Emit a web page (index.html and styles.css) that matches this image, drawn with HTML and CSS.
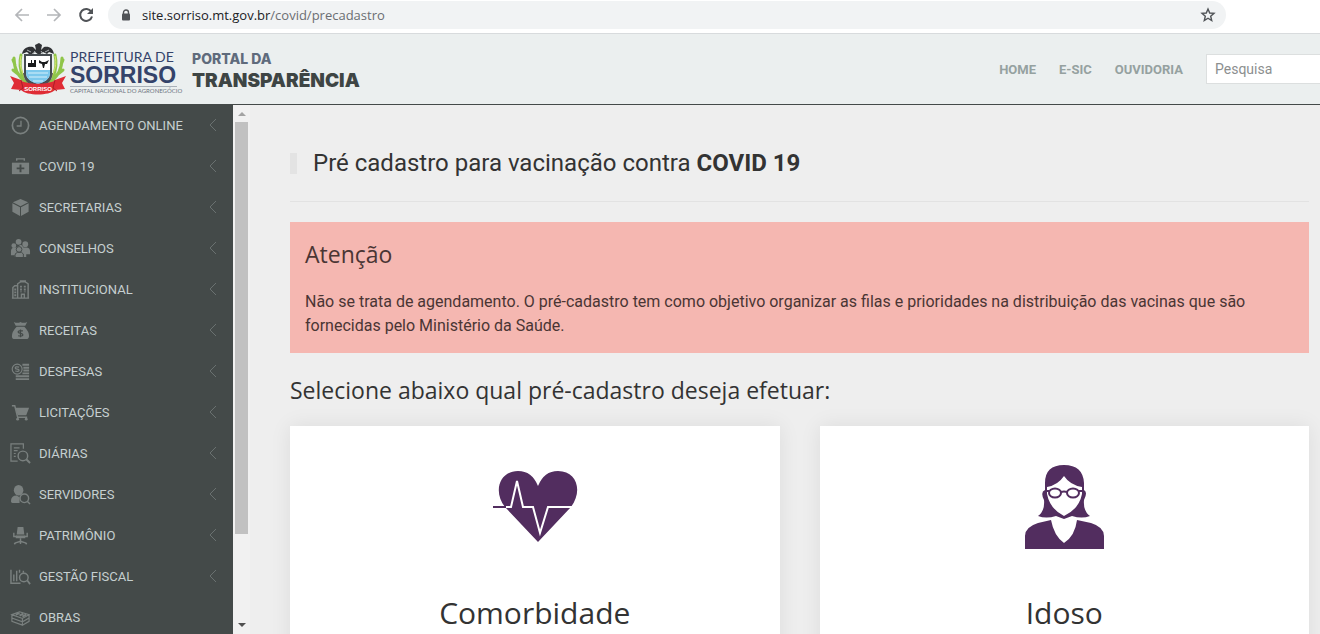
FILE: index.html
```html
<!DOCTYPE html>
<html lang="pt-BR">
<head>
    <meta charset="UTF-8">
    <meta name="viewport" content="width=device-width, initial-scale=1.0">
    <title>Portal da Transparência - Sorriso</title>
    <link rel="stylesheet" href="styles.css">
</head>
<body>

    <div class="browser-bar">
        <button class="nav-btn" aria-label="Voltar">
            <svg width="16" height="16" viewBox="0 0 16 16"><path d="M15 8H2M8 2L2 8l6 6" fill="none" stroke="#b4b6b9" stroke-width="1.7"/></svg>
        </button>
        <button class="nav-btn" aria-label="Avançar">
            <svg width="16" height="16" viewBox="0 0 16 16"><path d="M1 8h13M8 2l6 6-6 6" fill="none" stroke="#b4b6b9" stroke-width="1.7"/></svg>
        </button>
        <button class="nav-btn" aria-label="Recarregar">
            <svg width="16" height="16" viewBox="0 0 16 16"><path d="M13.3 4.7A6 6 0 1 0 14 9.500" fill="none" stroke="#505357" stroke-width="2"/><path d="M15 1v6H9z" fill="#505357"/></svg>
        </button>
        <div class="address">
            <svg width="10" height="12" viewBox="0 0 10 12"><path d="M2.500 5V3.500a2.500 2.500 0 0 1 5 0V5" fill="none" stroke="#505357" stroke-width="1.400"/><rect x="1" y="4.500" width="8" height="7" rx="1" fill="#505357"/></svg>
            <span class="url">site.sorriso.mt.gov.br<span class="path">/covid/precadastro</span></span>
            <button class="star" aria-label="Favorito">
                <svg width="16" height="16" viewBox="0 0 16 16"><path d="M8 2l1.700 4 4.300.400-3.300 2.800 1 4.300L8 11.200l-3.700 2.300 1-4.300L2 6.400 6.300 6z" fill="none" stroke="#505357" stroke-width="1.400"/></svg>
            </button>
        </div>
    </div>

    <header class="header">
        <a href="#" class="brand">
            <svg class="crest" width="58" height="52" viewBox="0 0 58 52">
                <!-- ramos -->
                <g fill="none" stroke="#8fc549" stroke-width="3" stroke-linecap="round">
                    <path d="M17 39C8 33 5 25 5 15M14 34C11 27 10 20 12 12M6 22l-2-5M9 31l-5-4"/>
                    <path d="M41 39c9-6 12-14 12-24M44 34c3-7 4-14 2-22M52 22l2-5M49 31l5-4"/>
                </g>
                <path d="M12 13c-2 8 0 14 4 22M46 13c2 8 0 14-4 22" fill="none" stroke="#d9e36a" stroke-width="1"/>
                <!-- águia -->
                <path d="M13 11c1-6 6-8 11-7l3 3-1-5 4-2 3 2-1 5 3-3c5-1 9 1 10 7l-5-2-2 2-4-2-4 3-4-3-5 3-3-3z" fill="#303235"/>
                <path d="M18 7l4 2M40 7l-4 2M26 8l-2 3M32 8l2 3" stroke="#aeb3b5" stroke-width="1"/>
                <!-- escudo -->
                <path d="M16 12h26v18c0 7-6 10-13 12-7-2-13-5-13-12z" fill="#fff" stroke="#454b50" stroke-width="2"/>
                <path d="M17 27h24v3c0 6-5 9-12 11-7-2-12-5-12-11z" fill="#7cc8ec"/>
                <path d="M19 30h20M20 34h18M24 38h10" stroke="#d6f0fb" stroke-width="1"/>
                <path d="M19 24v-4h3v-3h1v3h2v-3h2v7zM30 17l3 2h3l4-2-2 4h-2l-1 4h-1l-1-4-3-1z" fill="#191b1c"/>
                <path d="M15 30c1 7 6 12 14 14 8-2 13-7 14-14" fill="none" stroke="#4c5154" stroke-width="2"/>
                <!-- faixa -->
                <path d="M1 33l11 4c4 5 29 5 34 0l11-4-4 7 3 6-10 1c-6 6-28 6-34 0l-10-1 3-6z" fill="#df2c35"/>
                <path d="M12 37l2 8-4 3M46 37l-2 8 4 3" fill="none" stroke="#a91f28" stroke-width="1"/>
                <text class="crest-text" x="29" y="48" text-anchor="middle">SORRISO</text>
            </svg>
            <span class="city">
                <span class="city-top">PREFEITURA DE</span>
                <strong class="city-name">SORRISO</strong>
                <span class="city-sub">CAPITAL NACIONAL DO AGRONEGÓCIO</span>
            </span>
            <span class="portal">
                <span class="portal-top">PORTAL DA</span>
                <span class="portal-name">TRANSPARÊNCIA</span>
            </span>
        </a>
        <nav class="top-nav">
            <a href="#">HOME</a>
            <a href="#">E-SIC</a>
            <a href="#">OUVIDORIA</a>
            <input type="text" class="search" placeholder="Pesquisa" aria-label="Pesquisa">
        </nav>
    </header>

    <div class="layout">
        <aside class="sidebar">
            <ul class="menu">
                <li><a href="#">
                    <svg class="icon" viewBox="0 0 22 22"><circle cx="11" cy="11" r="8.500" fill="none" stroke="currentColor" stroke-width="1.800"/><path d="M11.500 6v5.500H7" fill="none" stroke="currentColor" stroke-width="1.400"/></svg>
                    <span>AGENDAMENTO ONLINE</span><svg class="arrow" viewBox="0 0 8 14"><path d="M7 1L1 7l6 6"/></svg></a></li>
                <li><a href="#">
                    <svg class="icon" viewBox="0 0 22 22"><path d="M2 7h18v12H2z" fill="currentColor"/><path d="M7 5V3h8v2" fill="none" stroke="currentColor" stroke-width="1.500"/><path d="M11 9v8M7 13h8" stroke="#444a49" stroke-width="2"/></svg>
                    <span>COVID 19</span><svg class="arrow" viewBox="0 0 8 14"><path d="M7 1L1 7l6 6"/></svg></a></li>
                <li><a href="#">
                    <svg class="icon" viewBox="0 0 22 22"><path d="M11 2l8 3.500-8 4.200L3 5.500zM2.500 6.500l8 4.200V20l-8-4.500zM19.500 6.500l-8 4.200V20l8-4.500z" fill="currentColor"/></svg>
                    <span>SECRETARIAS</span><svg class="arrow" viewBox="0 0 8 14"><path d="M7 1L1 7l6 6"/></svg></a></li>
                <li><a href="#">
                    <svg class="icon" viewBox="0 0 22 22"><g fill="currentColor"><circle cx="9" cy="4" r="3"/><circle cx="4" cy="8" r="2.500"/><circle cx="16" cy="6.500" r="3"/><path d="M1 18v-4q0-4 4-4h2l4-3q2 0 3 3h3q4 0 4 4v3h-4v3H5v-2z"/></g><circle cx="9.500" cy="12" r="3" fill="currentColor" stroke="#444a49"/><path d="M5.500 20q-1-4 2.500-5h4q3 1 2 5" fill="none" stroke="#444a49"/></svg>
                    <span>CONSELHOS</span><svg class="arrow" viewBox="0 0 8 14"><path d="M7 1L1 7l6 6"/></svg></a></li>
                <li><a href="#">
                    <svg class="icon" viewBox="0 0 22 22"><path d="M3 20V9l2-2h3v13M8 20V5l3-2h5l3 2v15M2 20h18M11 3V2h5v1M12 20v-4h3v4" fill="none" stroke="currentColor" stroke-width="1.500"/><path d="M11.500 7v7M15.500 7v7M5.500 10v8" stroke="currentColor" stroke-width="2" stroke-dasharray="2 1"/></svg>
                    <span>INSTITUCIONAL</span><svg class="arrow" viewBox="0 0 8 14"><path d="M7 1L1 7l6 6"/></svg></a></li>
                <li><a href="#">
                    <svg class="icon" viewBox="0 0 22 22"><path d="M4 2q4 2 7 0 3 2 7 0l-2 4H6zM7 7h8q5 5 5 10-.5 3-3 3H5q-3 0-3-3Q2 12 7 7z" fill="currentColor"/><path d="M13.500 11.500q-5-1-5 1.200 0 1 2.500 1.300t2.500 1.500q0 2-5 1M11 10v8" fill="none" stroke="#444a49" stroke-width="1.300"/></svg>
                    <span>RECEITAS</span><svg class="arrow" viewBox="0 0 8 14"><path d="M7 1L1 7l6 6"/></svg></a></li>
                <li><a href="#">
                    <svg class="icon" viewBox="0 0 22 22"><path d="M13 4h7M14 7h6M14 10h6M13 13h7M6 16h14M6 19h14" stroke="currentColor" stroke-width="2"/><circle cx="7.500" cy="8.500" r="5.200" fill="none" stroke="currentColor" stroke-width="1.200"/><path d="M9.500 6.500q-4-1-4 .8 0 .9 2 1.200t2 1.200q0 1.800-4 .8" fill="none" stroke="currentColor" stroke-width="1.300"/></svg>
                    <span>DESPESAS</span><svg class="arrow" viewBox="0 0 8 14"><path d="M7 1L1 7l6 6"/></svg></a></li>
                <li><a href="#">
                    <svg class="icon" viewBox="0 0 22 22"><path d="M2 4h3l3 12h10" fill="none" stroke="currentColor" stroke-width="1.500"/><path d="M5.500 6H20l-3 8H8z" fill="currentColor"/><circle cx="8" cy="18" r="1.500" fill="currentColor"/><circle cx="17" cy="18" r="1.500" fill="currentColor"/></svg>
                    <span>LICITAÇÕES</span><svg class="arrow" viewBox="0 0 8 14"><path d="M7 1L1 7l6 6"/></svg></a></li>
                <li><a href="#">
                    <svg class="icon" viewBox="0 0 22 22"><path d="M8 19H1V1h13v5M4 5h6M4 8h4M4 11h2M4 14h2" fill="none" stroke="currentColor" stroke-width="1.300"/><circle cx="13.500" cy="13.500" r="5" fill="none" stroke="currentColor" stroke-width="1.500"/><path d="M17 17l4 4" stroke="currentColor" stroke-width="2"/></svg>
                    <span>DIÁRIAS</span><svg class="arrow" viewBox="0 0 8 14"><path d="M7 1L1 7l6 6"/></svg></a></li>
                <li><a href="#">
                    <svg class="icon" viewBox="0 0 22 22"><ellipse cx="9" cy="6.500" rx="5" ry="5.500" fill="currentColor"/><path d="M1 18q0-6 6-6l3 2v6H4q-3 0-3-2z" fill="currentColor"/><circle cx="15" cy="15" r="4.500" fill="#444a49" stroke="currentColor" stroke-width="1.500"/><path d="M18 18l3 3" stroke="currentColor" stroke-width="1.500"/></svg>
                    <span>SERVIDORES</span><svg class="arrow" viewBox="0 0 8 14"><path d="M7 1L1 7l6 6"/></svg></a></li>
                <li><a href="#">
                    <svg class="icon" viewBox="0 0 22 22"><path d="M8 2h6l1 8H7zM6 11h10v3H6z" fill="currentColor"/><path d="M4 8v4h3M18 8v4h-3M11 14v6M5 19l6-2 6 2" fill="none" stroke="currentColor" stroke-width="1.500"/><circle cx="5" cy="19.500" r="1" fill="currentColor"/><circle cx="17" cy="19.500" r="1" fill="currentColor"/></svg>
                    <span>PATRIMÔNIO</span><svg class="arrow" viewBox="0 0 8 14"><path d="M7 1L1 7l6 6"/></svg></a></li>
                <li><a href="#">
                    <svg class="icon" viewBox="0 0 22 22"><path d="M1 4v14h10M4 16V9M7 16V5M10 7V4M14 7V5" fill="none" stroke="currentColor" stroke-width="1.500"/><circle cx="14.500" cy="12" r="4.500" fill="none" stroke="currentColor" stroke-width="1.500"/><path d="M18 15l3 4" stroke="currentColor" stroke-width="1.800"/></svg>
                    <span>GESTÃO FISCAL</span><svg class="arrow" viewBox="0 0 8 14"><path d="M7 1L1 7l6 6"/></svg></a></li>
                <li><a href="#">
                    <svg class="icon" viewBox="0 0 22 22"><path d="M2 8l8-3 10 3-7 4zM2 8v7l11 4V12M20 8v7l-7 4M2 11.500l11 4 7-4" fill="none" stroke="currentColor" stroke-width="1.200"/><path d="M6 8l4-1.500M10 9l4-2M13 10l4-2" stroke="currentColor" stroke-width="2"/></svg>
                    <span>OBRAS</span></a></li>
            </ul>
        </aside>
        <div class="scrollbar">
            <span class="up"></span>
            <div class="track"><div class="thumb"></div></div>
            <span class="down"></span>
        </div>

        <main class="content">
            <h1>Pré cadastro para vacinação contra <strong>COVID 19</strong></h1>

            <div class="alert">
                <h2>Atenção</h2>
                <p>Não se trata de agendamento. O pré-cadastro tem como objetivo organizar as filas e prioridades na distribuição das vacinas que são fornecidas pelo Ministério da Saúde.</p>
            </div>

            <h2 class="choose">Selecione abaixo qual pré-cadastro deseja efetuar:</h2>

            <div class="cards">
                <a href="#" class="card">
                    <svg width="86" height="86" viewBox="0 0 86 86">
                        <path d="M46 79L13 44C1 29 7 8 26 8q14 0 20 15Q52 8 66 8c19 0 25 20 13 36z" fill="#522d5f"/>
                        <path d="M13 44h6l6-26 6 26h10l7 26 8-26h24" fill="none" stroke="#fff" stroke-width="2"/>
                        <path d="M1 44h13" stroke="#522d5f" stroke-width="2"/>
                    </svg>
                    <h3>Comorbidade</h3>
                </a>
                <a href="#" class="card">
                    <svg width="86" height="86" viewBox="0 0 86 86">
                        <g fill="#522d5f">
                            <path d="M24 27V20Q24 2 43 2t20 18v7q4 2 0 10-1 11 6 16-8 3-18 0l-8 3-8-3q-10 3-18 0 7-5 6-16-4-8 1-10z"/>
                            <path d="M4 86V73q0-9 13-13l13-3q3 16 13 23 11-7 13-23l14 3q13 4 13 13v13z"/>
                        </g>
                        <path d="M43 13q6 9 18 11v7q-3 15-18 22-14-7-17-22v-7q11-2 17-11z" fill="#fff"/>
                        <g fill="#fff" stroke="#522d5f" stroke-width="2">
                            <ellipse cx="34" cy="30" rx="6" ry="4.500"/><ellipse cx="52" cy="30" rx="6" ry="4.500"/>
                            <path d="M40 29q3-1 6 0M24 28h4M58 28h4" fill="none"/>
                        </g>
                    </svg>
                    <h3>Idoso</h3>
                </a>
            </div>
        </main>
    </div>

</body>
</html>
```
FILE: styles.css
```css
* {
    box-sizing: border-box;
}
body {
    margin: 0;
    height: 100vh;
    display: flex;
    flex-direction: column;
    overflow: hidden;
    font-family: Roboto, Arial, sans-serif;
    background-color: #eee;
    color: #333;
}
a {
    text-decoration: none;
    color: inherit;
}
button {
    padding: 0;
    border: 0;
    background: none;
    cursor: pointer;
}
svg {
    display: block;
    flex: none;
}

/* barra do navegador */
.browser-bar {
    flex: none;
    display: flex;
    align-items: center;
    gap: 16px;
    height: 34px;
    padding: 0 94px 4px 14px;
    background: #fff;
    border-bottom: 1px solid #d8dbdd;
}
.address {
    flex: 1;
    display: flex;
    align-items: center;
    gap: 11px;
    height: 28px;
    margin-left: -2px;
    padding: 0 10px 0 13px;
    border-radius: 14px;
    background: #f1f3f4;
}
.url {
    flex: 1;
    font-family: "Open Sans", sans-serif;
    font-size: 13px;
    color: #202124;
}
.path {
    color: #6b6e72;
}

/* topo */
.header {
    flex: none;
    display: flex;
    align-items: center;
    justify-content: space-between;
    height: 71px;
    background: #ebefef;
    border-bottom: 1px solid #444a49;
}
.brand {
    display: flex;
    align-items: center;
    padding-left: 9px;
}
.crest-text {
    font: bold 6px "Liberation Sans", Arial, sans-serif;
    fill: #fff;
}
.city {
    display: flex;
    flex-direction: column;
    width: 107px;
    margin-left: 3px;
    padding-top: 5px;
    font-family: Lato, Arial, sans-serif;
    color: #34436a;
    white-space: nowrap;
}
.city-top {
    font-size: 14px;
    line-height: 16px;
}
.city-name {
    font-family: "Liberation Sans", Arial, sans-serif;
    font-size: 23px;
    line-height: 20px;
}
.city-sub {
    margin-top: 1px;
    border-top: 1px solid #a9b0b8;
    font-size: 6px;
    line-height: 8px;
    color: #6c7480;
}
.portal {
    display: flex;
    flex-direction: column;
    margin-left: 15px;
    padding-top: 3px;
    font-family: Inter, Arial, sans-serif;
    font-weight: 900;
}
.portal-top {
    font-size: 14px;
    font-weight: 800;
    line-height: 20px;
    color: #5f6b7c;
}
.portal-name {
    font-size: 19px;
    line-height: 24px;
    color: #3e4544;
}
.top-nav {
    display: flex;
    align-items: center;
    gap: 23px;
    font-size: 13px;
    font-weight: bold;
    color: #95a1a0;
}
.search {
    width: 114px;
    height: 30px;
    padding: 0 8px;
    border: 1px solid #dcdfdf;
    border-right: 0;
    background: #fff;
    font-family: inherit;
    font-size: 14px;
}
.search::placeholder {
    color: #8c8f8f;
}

/* menu lateral */
.layout {
    flex: 1;
    display: flex;
    min-height: 0;
}
.sidebar {
    flex: none;
    width: 233px;
    overflow: hidden;
    background: #444a49;
}
.menu {
    margin: 0;
    padding: 0;
    list-style: none;
}
.menu a {
    display: flex;
    align-items: center;
    height: 41px;
    padding: 0 16px 1px 10px;
    font-size: 13px;
    color: #c6d0d0;
}
.menu span {
    flex: 1;
    margin-left: 8px;
}
.icon {
    width: 21px;
    height: 21px;
    color: #7a807f;
}
.arrow {
    width: 8px;
    height: 14px;
    fill: none;
    stroke: #6a7170;
}
.scrollbar {
    flex: none;
    display: flex;
    flex-direction: column;
    align-items: center;
    width: 17px;
    background: #f1f1f1;
}
.up, .down {
    border: 4px solid transparent;
}
.up {
    margin: 3px 0 6px;
    border-bottom-color: #a3a3a3;
}
.down {
    margin: 5px 0 3px;
    border-top-color: #505050;
}
.track {
    flex: 1;
    width: 13px;
}
.thumb {
    height: 83%;
    background: #c1c1c1;
}

/* conteudo */
.content {
    flex: 1;
    min-width: 0;
    overflow: hidden;
    padding: 39px 11px 0 40px;
}
h1, h2, h3 {
    margin: 0;
    font-weight: normal;
}
h1 {
    display: flex;
    align-items: center;
    gap: 6px;
    padding-bottom: 19px;
    border-bottom: 1px solid #e2e2e2;
    font-size: 24px;
    line-height: 38px;
}
h1::before {
    content: "";
    width: 7px;
    height: 21px;
    margin-right: 10px;
    background: #e3e3e3;
}
h2 {
    font-family: "Open Sans", sans-serif;
    font-size: 23px;
    line-height: 32px;
}
.alert {
    margin-top: 20px;
    padding: 16px 15px 15px;
    background: #f5b7b1;
    color: #4a3534;
}
.alert p {
    margin: 20px 0 0;
    font-size: 16px;
    line-height: 24px;
}
.choose {
    margin: 21px 0 20px;
}
.cards {
    display: grid;
    grid-template-columns: 1fr 1fr;
    gap: 40px;
}
.card {
    display: flex;
    flex-direction: column;
    align-items: center;
    padding: 37px 20px 40px;
    background: #fff;
    box-shadow: 0 0 20px rgba(0, 0, 0, 0.08);
}
.card h3 {
    margin-top: 43px;
    font-family: "Open Sans", sans-serif;
    font-size: 30px;
    line-height: 42px;
}
```
